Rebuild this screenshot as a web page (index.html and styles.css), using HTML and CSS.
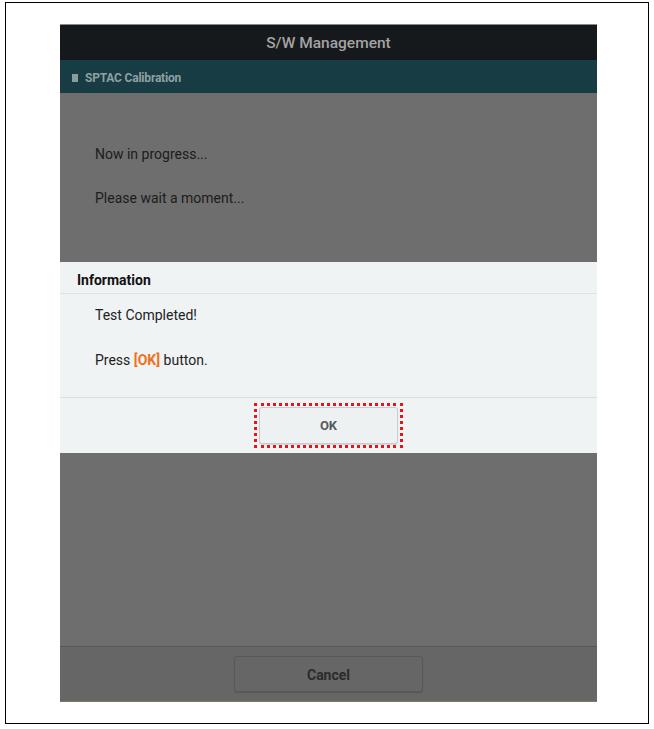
FILE: index.html
```html
<!DOCTYPE html>
<html>
<head>
<meta charset="utf-8">
<link rel="stylesheet" href="styles.css">
</head>
<body>
<div class="frame">
  <div class="screen">
    <div class="titlebar">S/W Management</div>
    <div class="subbar"><span class="sq"></span><span class="subtitle">SPTAC Calibration</span></div>
    <div class="content">
      <div class="msg">
        <p class="line">Now in progress...</p>
        <p class="line">Please wait a moment...</p>
      </div>
      <div class="dialog">
        <div class="dlg-head">Information</div>
        <div class="dlg-body">
          <p class="line">Test Completed!</p>
          <p class="line">Press <span class="ok">[OK]</span> button.</p>
        </div>
        <div class="dlg-foot">
          <div class="focus"><button class="btn-ok">OK</button></div>
        </div>
      </div>
    </div>
    <div class="footer">
      <button class="btn-cancel">Cancel</button>
    </div>
  </div>
</div>
</body>
</html>
```

FILE: styles.css
```css
html, body {
  margin: 0;
  padding: 0;
  background: #ffffff;
}
body {
  font-family: Roboto, "Liberation Sans", sans-serif;
}
.frame {
  margin: 2px 0 0 5px;
  width: 588px;
  height: 699px;
  border: 1.5px solid #000;
  padding: 21px 0 0 54px;
}
.screen {
  width: 537px;
  height: 678px;
  display: flex;
  flex-direction: column;
}
.titlebar {
  height: 36px;
  background: #16191c;
  border-top: 1px solid #8a8a8a;
  box-sizing: border-box;
  color: #a3a3a3;
  font-size: 15.5px;
  font-weight: 500;
  display: flex;
  align-items: center;
  justify-content: center;
  padding-top: 1px;
}
.subbar {
  height: 33px;
  background: #173c43;
  display: flex;
  align-items: center;
  padding-left: 12px;
  padding-top: 2px;
  box-sizing: border-box;
}
.sq {
  width: 6px;
  height: 8px;
  background: #8c9c9e;
  margin-right: 7px;
}
.subtitle {
  color: #8fa0a2;
  font-size: 12px;
  font-weight: 700;
  letter-spacing: -0.2px;
}
.content {
  flex: 1;
  background: #6e6e6e;
  position: relative;
}
.msg {
  padding: 51px 0 0 35px;
}
.line {
  margin: 0 0 24px 0;
  font-size: 14px;
  line-height: 20px;
  color: #1c1c1c;
}
.dialog {
  position: absolute;
  left: 0;
  right: 0;
  top: 169px;
  height: 191px;
  background: #eff3f4;
  display: flex;
  flex-direction: column;
}
.dlg-head {
  height: 32px;
  box-sizing: border-box;
  padding: 8px 0 0 17px;
  font-size: 14px;
  font-weight: 700;
  line-height: 20px;
  color: #111;
  border-bottom: 1px solid #dde2e4;
}
.dlg-body {
  height: 104px;
  box-sizing: border-box;
  padding: 11px 0 0 35px;
  border-bottom: 1px solid #d9dee0;
}
.dlg-body .line {
  color: #222;
  margin-bottom: 25px;
}
.ok {
  color: #f07020;
  font-weight: 700;
}
.dlg-foot {
  flex: 1;
  display: flex;
  justify-content: center;
  align-items: flex-start;
  padding-top: 5px;
}
.focus {
  border: 3px dotted #e8141c;
  padding: 1px 2px;
}
.btn-ok {
  display: block;
  width: 139px;
  height: 37px;
  background: #eef1f2;
  border: 1px solid #c9cdcf;
  border-radius: 3px;
  box-shadow: 0 1px 1px rgba(0,0,0,0.12);
  font-family: Roboto, "Liberation Sans", sans-serif;
  font-size: 13px;
  font-weight: 700;
  color: #555a5e;
}
.footer {
  height: 56px;
  box-sizing: border-box;
  background: #666666;
  border-top: 1px solid #575757;
  border-bottom: 1px solid #7d7a5e;
  display: flex;
  justify-content: center;
  align-items: flex-start;
  padding-top: 9px;
}
.btn-cancel {
  width: 189px;
  height: 36px;
  background: #666;
  border: 1px solid #585858;
  border-radius: 3px;
  box-shadow: 0 1px 1px rgba(0,0,0,0.15);
  font-family: Roboto, "Liberation Sans", sans-serif;
  font-size: 14px;
  font-weight: 700;
  color: #2b2b2b;
  padding-top: 2px;
}
```
